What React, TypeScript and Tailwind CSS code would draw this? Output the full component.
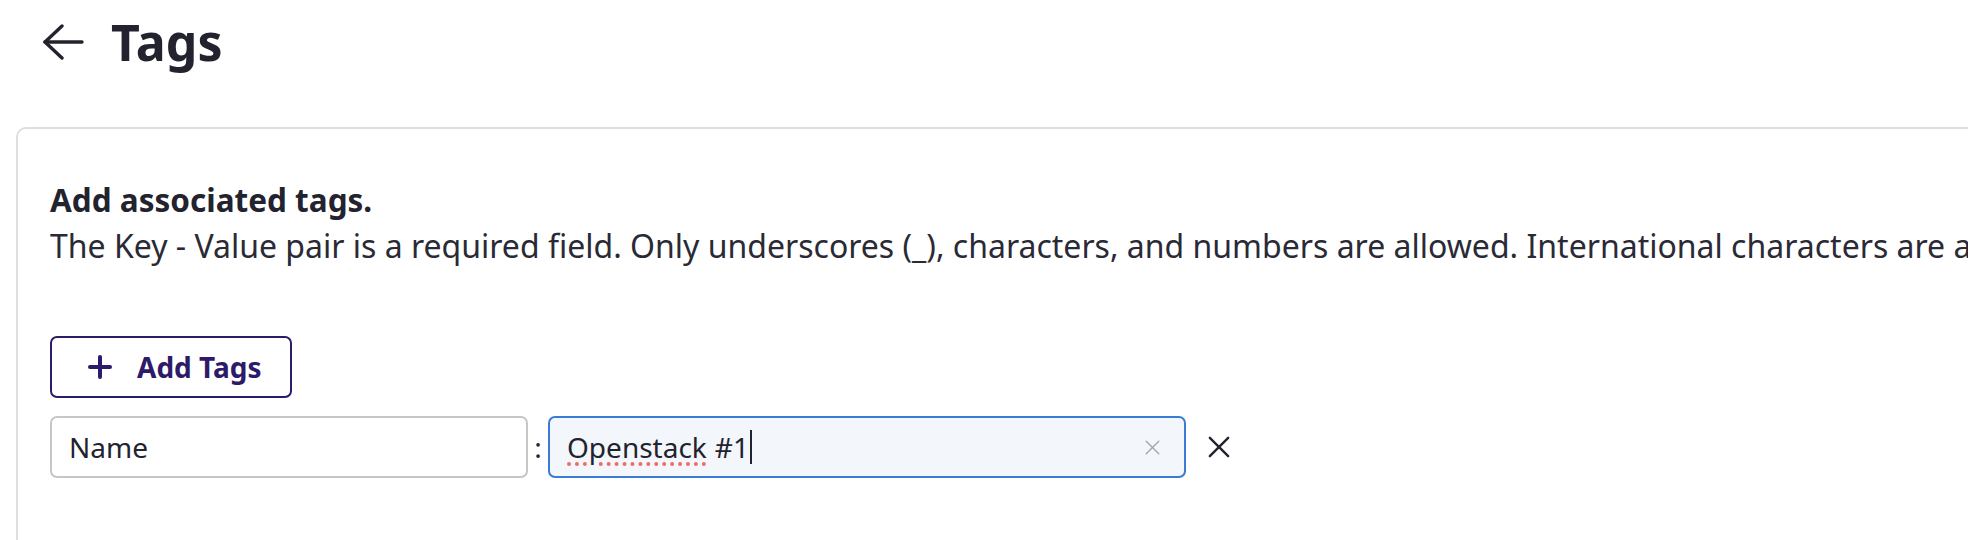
import React from "react"

const BackArrow = () => (
    <svg width="42" height="36" viewBox="0 0 42 36" fill="none" stroke="#23232f" strokeWidth="3.4" strokeLinecap="round" strokeLinejoin="round">
        <path d="M3 18H40" />
        <path d="M20 2L3 18L20 34" />
    </svg>
)

const PlusIcon = () => (
    <svg width="24" height="24" viewBox="0 0 24 24" fill="none" stroke="#2d1b69" strokeWidth="4" strokeLinecap="round">
        <path d="M12 2V22" />
        <path d="M2 12H22" />
    </svg>
)

const CloseIcon = ({ size, color, stroke }: { size: number; color: string; stroke: number }) => (
    <svg width={size} height={size} viewBox="0 0 24 24" fill="none" stroke={color} strokeWidth={stroke} strokeLinecap="round">
        <path d="M2 2L22 22" />
        <path d="M22 2L2 22" />
    </svg>
)

export default function App() {
    return (
        <div className="w-full h-[540px] overflow-hidden bg-white text-[#23232f] font-['Noto_Sans',sans-serif]">
            {/* cabecera */}
            <div className="flex items-center pt-[10px] pl-[42px] h-[74px]">
                <BackArrow />
                <h1 className="ml-[27px] text-[50px] leading-[64px] font-bold">Tags</h1>
            </div>

            {/* tarjeta */}
            <div className="ml-[16px] mt-[53px] min-h-[500px] border-l-2 border-t-2 border-[#dedede] rounded-tl-[10px] pt-[48px] pl-[32px]">
                <p className="text-[31.5px] leading-[46px] font-bold">Add associated tags.</p>
                <p className="text-[32px] leading-[46px] whitespace-nowrap text-[#2a2a36]">
                    The Key - Value pair is a required field. Only underscores (_), characters, and numbers are allowed. International characters are allowed.
                </p>

                <button className="mt-[67px] flex items-center w-[242px] h-[62px] pl-[36px] border-2 border-[#2d1b69] rounded-[7px] text-[#2d1b69] text-[28px] font-bold">
                    <PlusIcon />
                    <span className="ml-[25px]">Add Tags</span>
                </button>

                <div className="mt-[18px] flex items-center">
                    <div className="flex items-center w-[478px] h-[62px] border-2 border-[#c6c6c8] rounded-[7px] pl-[17px] text-[28px]">
                        Name
                    </div>
                    <span className="w-[20px] text-center text-[28px]">:</span>
                    <div className="flex items-center w-[638px] h-[62px] border-2 border-[#3a7bd5] bg-[#f3f6fb] rounded-[7px] pl-[17px] pr-[24px] text-[28px]">
                        <span className="underline decoration-dotted decoration-[#ec6f66] decoration-[4px] underline-offset-[4px]">Openstack</span>
                        <span className="ml-[8px]">#1</span>
                        <span className="inline-block w-[2px] h-[34px] bg-[#23232f] ml-[1px]" />
                        <span className="ml-auto flex items-center">
                            <CloseIcon size={15} color="#a2a2a6" stroke={2} />
                        </span>
                    </div>
                    <span className="ml-[22px] flex items-center">
                        <CloseIcon size={22} color="#23232f" stroke={2.6} />
                    </span>
                </div>
            </div>
        </div>
    )
}
